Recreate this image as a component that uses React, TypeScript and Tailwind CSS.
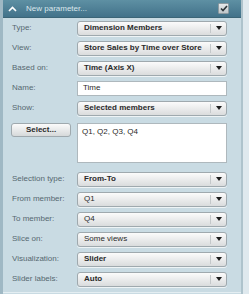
import { ReactNode } from "react";

const FONT = { fontFamily: '"Liberation Sans", Arial, sans-serif' };

function Arrow() {
  return (
    <svg width="6" height="4" viewBox="0 0 6 4" className="block">
      <path d="M0 0 H6 L3 4 Z" fill="#1e1e1e" />
    </svg>
  );
}

function Dropdown({ value, bold = true }: { value: string; bold?: boolean }) {
  return (
    <div className="flex h-[15px] w-[150px] items-center rounded-[3px] border border-[#9fa9ae] bg-gradient-to-b from-[#fbfbfb] to-[#dadcdd] shadow-[0_1px_0_#eef4f6]">
      <span
        className={`flex-1 truncate pl-[6px] text-[8px] leading-none text-[#2a2a2a] ${bold ? "font-bold" : ""}`}
      >
        {value}
      </span>
      <span className="h-[9px] w-px bg-[#c4c8ca]" />
      <span className="flex w-[15px] justify-center">
        <Arrow />
      </span>
    </div>
  );
}

function Row({ label, children }: { label: string; children: ReactNode }) {
  return (
    <div className="flex h-[20px] items-center">
      <span className="w-[74px] pl-[9px] text-[8px] leading-none text-[#566870]">{label}</span>
      {children}
    </div>
  );
}

export default function App() {
  return (
    <div className="h-[294px] w-[249px] overflow-hidden bg-[#dfe9ee]" style={FONT}>
      <div className="flex h-[294px] w-[243px] flex-col border-l-[3px] border-r-[2px] border-l-[#9fb8c4] border-r-[#aec3cc] bg-[#c9dbe3]">
        {/* Header */}
        <div className="flex h-[18px] items-center border-b border-[#3b6577] bg-gradient-to-b from-[#5e90a3] to-[#42728a] pl-[4px] pr-[12px]">
          <svg width="9" height="6" viewBox="0 0 9 6" className="ml-[1px]">
            <path d="M1 5 L4.5 1.5 L8 5" stroke="#ffffff" strokeWidth="1.6" fill="none" />
          </svg>
          <span className="ml-[9px] flex-1 text-[8px] leading-none text-[#dce8ed]">New parameter...</span>
          <span className="flex h-[11px] w-[11px] items-center justify-center rounded-[1px] border border-[#8e9ba1] bg-gradient-to-b from-[#e6e9eb] to-[#bfc6ca]">
            <svg width="8" height="7" viewBox="0 0 8 7">
              <path d="M1 3.5 L3 5.5 L7 1" stroke="#2c3438" strokeWidth="1.6" fill="none" />
            </svg>
          </span>
        </div>

        <Row label="Type:">
          <Dropdown value="Dimension Members" />
        </Row>
        <Row label="View:">
          <Dropdown value="Store Sales by Time over Store" />
        </Row>
        <Row label="Based on:">
          <Dropdown value="Time (Axis X)" />
        </Row>
        <Row label="Name:">
          <div className="flex h-[15px] w-[150px] items-center border border-[#aeb8bd] bg-white pl-[5px] text-[8px] leading-none text-[#2a2a2a]">
            Time
          </div>
        </Row>
        <Row label="Show:">
          <Dropdown value="Selected members" />
        </Row>

        <div className="mt-[5px] mb-[6px] flex h-[40px] items-start">
          <div className="w-[74px] pl-[8px]">
            <button className="flex h-[14px] w-[60px] items-center justify-center rounded-[3px] border border-[#9fa9ae] bg-gradient-to-b from-[#fbfbfb] to-[#d6d9da] text-[8px] font-bold leading-none text-[#2a2a2a]">
              Select...
            </button>
          </div>
          <div className="h-[40px] w-[150px] border border-[#aeb8bd] bg-white px-[4px] pt-[4px] text-[8px] leading-none text-[#2a2a2a]">
            Q1, Q2, Q3, Q4
          </div>
        </div>

        <Row label="Selection type:">
          <Dropdown value="From-To" />
        </Row>
        <Row label="From member:">
          <Dropdown value="Q1" bold={false} />
        </Row>
        <Row label="To member:">
          <Dropdown value="Q4" bold={false} />
        </Row>
        <Row label="Slice on:">
          <Dropdown value="Some views" bold={false} />
        </Row>
        <Row label="Visualization:">
          <Dropdown value="Slider" />
        </Row>
        <Row label="Slider labels:">
          <Dropdown value="Auto" />
        </Row>
        <div className="mt-[3px] h-px bg-[#e4eef2]" />
      </div>
    </div>
  );
}
